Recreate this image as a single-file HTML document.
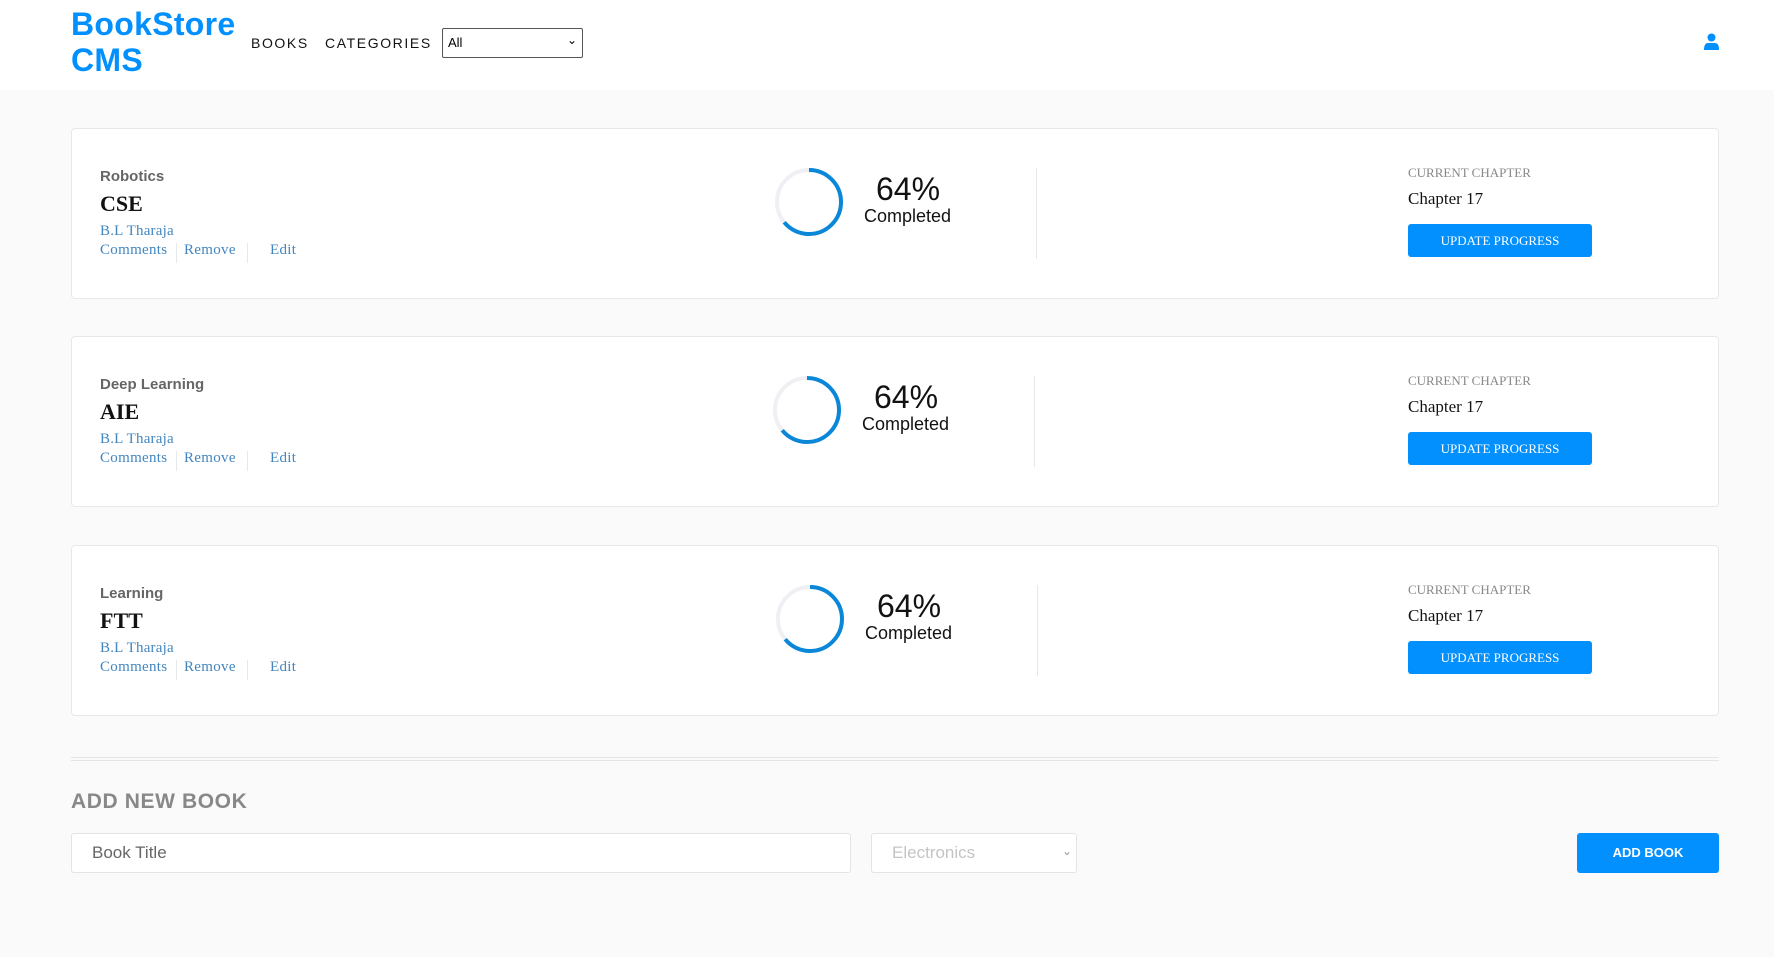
<!DOCTYPE html>
<html><head><meta charset="utf-8"><style>
*{box-sizing:border-box;margin:0;padding:0}
body{width:1774px;height:957px;background:#fafafa;font-family:"Liberation Sans",sans-serif;position:relative;overflow:hidden}
.hdr{position:absolute;left:0;top:0;width:1774px;height:90px;background:#fff}
.logo{position:absolute;left:71px;top:6px;font-size:32px;font-weight:bold;color:#0290ff;line-height:36px;letter-spacing:0.3px}
.nav{position:absolute;top:35px;font-size:14px;letter-spacing:1.6px;color:#121212}
.sel{position:absolute;left:442px;top:28px;width:141px;height:30px;border:1px solid #555;border-radius:2px;background:#fff;font-size:13px;padding:6px 5px}
.card{position:absolute;left:71px;width:1648px;height:171px;background:#fff;border:1px solid #e8e8e8;border-radius:4px}
.cat{position:absolute;left:28px;top:39px;font-size:15px;font-weight:bold;color:#666}
.ttl{position:absolute;left:28px;top:62px;font-size:22px;font-weight:bold;color:#121212;font-family:"Liberation Serif",serif}
.au{position:absolute;left:28px;top:94px;font-size:15px;color:#4386bf;font-family:"Liberation Serif",serif;letter-spacing:0.2px}
.a{position:absolute;top:113px;font-size:15px;color:#4386bf;font-family:"Liberation Serif",serif;white-space:nowrap;letter-spacing:0.3px}
.sep{position:absolute;top:114px;width:1px;height:20px;background:#e8e8e8}
.ring{position:absolute;left:702px;top:39px}
.pct{position:absolute;left:804px;top:42px;font-size:32px;color:#121212}
.cmp{position:absolute;left:792px;top:77px;font-size:18px;color:#121212}
.vd{position:absolute;left:964px;top:39px;width:1px;height:91px;background:#e8e8e8}
.cc{position:absolute;left:1336px;top:36px;font-size:13px;color:#888;font-family:"Liberation Serif",serif}
.ch{position:absolute;left:1336px;top:60px;font-size:17px;color:#121212;font-family:"Liberation Serif",serif}
.btn{position:absolute;left:1336px;top:95px;width:184px;height:33px;background:#0290ff;border-radius:3px;color:#fff;font-size:13px;font-family:"Liberation Serif",serif;text-align:center;line-height:33px}
</style></head><body>
<div class="hdr">
<div class="logo">BookStore<br>CMS</div>
<div class="nav" style="left:251px">BOOKS</div>
<div class="nav" style="left:325px">CATEGORIES</div>
<div class="sel">All<span style="position:absolute;right:5px;top:4px;font-size:12px">&#8964;</span></div>
<svg style="position:absolute;left:1703px;top:33px" width="17" height="17" viewBox="0 0 17 17"><circle cx="8.5" cy="4.5" r="4" fill="#0290ff"/><path d="M1 17 Q1 10 5 10 H12 Q16 10 16 17Z" fill="#0290ff"/></svg>
</div>

<div class="card" style="top:128px">
<div class="cat">Robotics</div><div class="ttl">CSE</div><div class="au">B.L Tharaja</div>
<div class="a" style="left:28px">Comments</div><div class="sep" style="left:104px"></div><div class="a" style="left:112px">Remove</div><div class="sep" style="left:175px"></div><div class="a" style="left:198px">Edit</div>
<svg class="ring" width="70" height="70"><circle cx="35" cy="34" r="32" fill="none" stroke="#f0f0f4" stroke-width="4"/><circle cx="35" cy="34" r="32" fill="none" stroke="#0a87d8" stroke-width="4" stroke-dasharray="128.7 201" transform="rotate(-90 35 34)"/></svg>
<div class="pct">64%</div><div class="cmp">Completed</div><div class="vd"></div>
<div class="cc">CURRENT CHAPTER</div><div class="ch">Chapter 17</div><div class="btn">UPDATE PROGRESS</div>
</div>

<div class="card" style="top:336px">
<div class="cat">Deep Learning</div><div class="ttl">AIE</div><div class="au">B.L Tharaja</div>
<div class="a" style="left:28px">Comments</div><div class="sep" style="left:104px"></div><div class="a" style="left:112px">Remove</div><div class="sep" style="left:175px"></div><div class="a" style="left:198px">Edit</div>
<svg class="ring" style="left:700px" width="70" height="70"><circle cx="35" cy="34" r="32" fill="none" stroke="#f0f0f4" stroke-width="4"/><circle cx="35" cy="34" r="32" fill="none" stroke="#0a87d8" stroke-width="4" stroke-dasharray="128.7 201" transform="rotate(-90 35 34)"/></svg>
<div class="pct" style="left:802px">64%</div><div class="cmp" style="left:790px">Completed</div><div class="vd" style="left:962px"></div>
<div class="cc">CURRENT CHAPTER</div><div class="ch">Chapter 17</div><div class="btn">UPDATE PROGRESS</div>
</div>

<div class="card" style="top:545px">
<div class="cat">Learning</div><div class="ttl">FTT</div><div class="au">B.L Tharaja</div>
<div class="a" style="left:28px">Comments</div><div class="sep" style="left:104px"></div><div class="a" style="left:112px">Remove</div><div class="sep" style="left:175px"></div><div class="a" style="left:198px">Edit</div>
<svg class="ring" style="left:703px" width="70" height="70"><circle cx="35" cy="34" r="32" fill="none" stroke="#f0f0f4" stroke-width="4"/><circle cx="35" cy="34" r="32" fill="none" stroke="#0a87d8" stroke-width="4" stroke-dasharray="128.7 201" transform="rotate(-90 35 34)"/></svg>
<div class="pct" style="left:805px">64%</div><div class="cmp" style="left:793px">Completed</div><div class="vd" style="left:965px"></div>
<div class="cc">CURRENT CHAPTER</div><div class="ch">Chapter 17</div><div class="btn">UPDATE PROGRESS</div>
</div>

<div style="position:absolute;left:71px;top:757px;width:1648px;height:4px;border-top:1px solid #e4e4e4;border-bottom:1px solid #e4e4e4"></div>
<div style="position:absolute;left:71px;top:790px;font-size:21px;font-weight:bold;color:#888;letter-spacing:0.6px">ADD NEW BOOK</div>
<div style="position:absolute;left:71px;top:833px;width:780px;height:40px;background:#fff;border:1px solid #e4e4e4;border-radius:3px;font-size:17px;color:#666;padding:9px 20px">Book Title</div>
<div style="position:absolute;left:871px;top:833px;width:206px;height:40px;background:#fff;border:1px solid #e4e4e4;border-radius:3px;font-size:17px;color:#c4c4c4;padding:9px 20px">Electronics<span style="position:absolute;right:4px;top:10px;font-size:12px;color:#999">&#8964;</span></div>
<div style="position:absolute;left:1577px;top:833px;width:142px;height:40px;background:#0290ff;border-radius:3px;color:#fff;font-size:13px;font-weight:bold;text-align:center;line-height:40px">ADD BOOK</div>
</body></html>
